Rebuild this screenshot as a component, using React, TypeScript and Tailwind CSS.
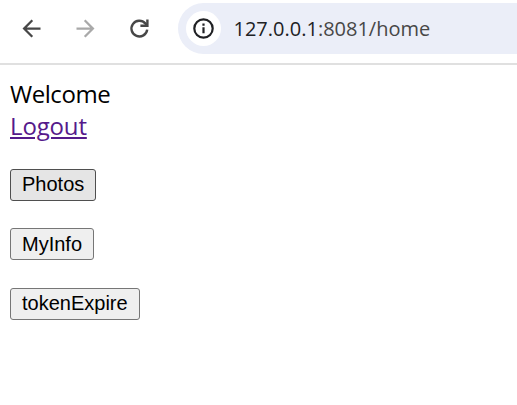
const uiFont = "font-['Open_Sans','Noto_Sans',sans-serif]";

function Toolbar() {
  return (
    <header className="flex h-[65px] items-start border-b-2 border-[#e0e0e0] bg-white">
      <div className="flex h-[57px] w-[178px] shrink-0 items-center pl-[18px]">
        <svg width="27" height="27" viewBox="0 0 24 24" fill="#474747" className="shrink-0">
          <path d="M20 11H7.83l5.59-5.59L12 4l-8 8 8 8 1.41-1.41L7.83 13H20z" />
        </svg>
        <svg width="27" height="27" viewBox="0 0 24 24" fill="#a9a9a9" className="ml-[27px] shrink-0">
          <path d="M12 4l-1.41 1.41L16.17 11H4v2h12.17l-5.58 5.59L12 20l8-8z" />
        </svg>
        <svg width="27" height="27" viewBox="0 0 27 27" fill="none" stroke="#474747" strokeWidth="2.4" className="ml-[27px] shrink-0">
          <path d="M21.2 14.6A7.9 7.9 0 1 1 19.3 8.4L21 10.4" />
          <path d="M21.4 4.4v6.4h-7" />
        </svg>
      </div>
      <div className={`mt-[3px] flex h-[51px] flex-1 items-center rounded-l-full bg-[#ebeef8] pl-2 ${uiFont}`}>
        <span className="flex size-[35px] shrink-0 items-center justify-center rounded-full bg-white">
          <svg width="21" height="21" viewBox="0 0 21 21" fill="none" stroke="#202124">
            <circle cx="10.5" cy="10.5" r="9.2" strokeWidth="2.2" />
            <path d="M10.5 9.3v6M10.5 5.6v2.2" strokeWidth="2.2" />
          </svg>
        </span>
        <span className="ml-[12.5px] text-[20px] leading-[30px] whitespace-nowrap text-[#474747]">
          <span className="text-[#202124]">127.0.0.1</span>:8081/home
        </span>
      </div>
    </header>
  );
}

const buttonBase =
  "flex h-8 items-start rounded-[3px] border px-[11px] font-['Liberation_Sans',Arial,sans-serif] text-[20px] text-black";

export default function App() {
  return (
    <div className="h-[405px] overflow-hidden bg-white">
      <Toolbar />
      <main className={`flex flex-col items-start px-[10px] pt-[13px] text-[24px] leading-8 text-black ${uiFont}`}>
        <p className="tracking-[-0.45px]">Welcome</p>
        <a
          href="#"
          className="tracking-[-0.15px] text-[#551a8b] underline decoration-2 underline-offset-2"
        >
          Logout
        </a>
        <div className="mt-[27px] flex flex-col items-start">
          <button className={`${buttonBase} border-[#4f4f4f] bg-[#e5e5e5] leading-[28px]`}>Photos</button>
          <button className={`${buttonBase} mt-[27px] border-[#767676] bg-[#efefef] leading-[30px]`}>MyInfo</button>
          <button className={`${buttonBase} mt-[28px] border-[#767676] bg-[#efefef] leading-[28px]`}>tokenExpire</button>
        </div>
      </main>
    </div>
  );
}
